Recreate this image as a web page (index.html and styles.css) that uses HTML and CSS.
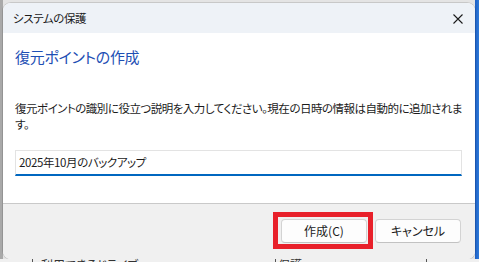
FILE: index.html
```html
<!DOCTYPE html>
<html lang="ja">
<head>
<meta charset="utf-8">
<link rel="stylesheet" href="styles.css">
</head>
<body>
<div class="screen">
  <div class="desk-row">
    <div class="dialog">
      <div class="titlebar">
        <span class="title">システムの保護</span>
        <svg class="close" width="10" height="10" viewBox="0 0 10 10"><path d="M0.5 0.5 L9.5 9.5 M9.5 0.5 L0.5 9.5" stroke="#1b1b1b" stroke-width="1.1" fill="none"/></svg>
      </div>
      <div class="content">
        <h1 class="heading">復元ポイントの作成</h1>
        <p class="desc">復元ポイントの識別に役立つ説明を入力してください。現在の日時の情報は自動的に追加されま<br>す。</p>
        <div class="input">2025年10月のバックアップ</div>
      </div>
      <div class="footer">
        <button class="btn">作成(C)</button>
        <button class="btn">キャンセル</button>
      </div>
      <div class="highlight"></div>
    </div>
  </div>
  <div class="behind">
    <span class="behind-a">利用できるドライブ</span>
    <span class="behind-b">保護</span>
  </div>
</div>
</body>
</html>
```
FILE: styles.css
```css
* { box-sizing: border-box; }
html, body { margin: 0; padding: 0; }
body {
  width: 479px;
  height: 262px;
  overflow: hidden;
  background: #d6d6d6;
  font-family: "Noto Sans CJK JP", "Noto Sans", sans-serif;
  font-feature-settings: "palt";
}
.screen {
  width: 479px;
  height: 262px;
  overflow: hidden;
  background: linear-gradient(to right, #a9a9a9 0, #a9a9a9 3px, #e4e4e4 3px, #e4e4e4 475px, #1d5fc4 475px, #2f7ad8 479px);
  padding-top: 3px;
}
.desk-row {
  padding-left: 3px;
}
.dialog {
  position: relative;
  width: 472px;
  height: 256px;
  border-radius: 8px;
  overflow: hidden;
  background: #ffffff;
  display: flex;
  flex-direction: column;
  box-shadow: 0 0 0 1px rgba(0,0,0,0.12);
}
.titlebar {
  height: 30px;
  background: #eef2f7;
  display: flex;
  align-items: center;
  justify-content: space-between;
  padding: 0 12px 0 10px;
}
.title {
  font-size: 11.5px;
  letter-spacing: -0.4px;
  color: #1b1b1b;
  line-height: 16px;
}
.close { display: block; margin-top: 1px; }
.content {
  flex: 1;
  padding: 14px 13px 0 12px;
  background: #ffffff;
}
.heading {
  margin: 0;
  font-size: 15px;
  font-weight: normal;
  letter-spacing: -0.3px;
  line-height: 20px;
  color: #1e4fb4;
}
.desc {
  margin: 33px 0 0 0;
  font-size: 11.5px;
  letter-spacing: -0.5px;
  line-height: 16px;
  color: #1b1b1b;
  white-space: nowrap;
}
.input {
  margin-top: 18px;
  height: 26px;
  border: 1px solid #e3e3e3;
  border-bottom: 2px solid #0067c0;
  font-size: 11.5px;
  letter-spacing: -0.4px;
  line-height: 22px;
  padding-left: 3px;
  color: #1b1b1b;
}
.footer {
  height: 56px;
  background: #f0f0f0;
  border-top: 1px solid #c9c9c9;
  display: flex;
  justify-content: flex-end;
  gap: 8px;
  padding: 15px 14px 0 0;
}
.btn {
  width: 86px;
  height: 24px;
  background: #fdfdfd;
  border: 1px solid #d3d3d3;
  border-bottom-color: #c2c2c2;
  border-radius: 4px;
  font-family: inherit;
  font-feature-settings: "palt";
  font-size: 12px;
  color: #1b1b1b;
  padding: 0;
  line-height: 20px;
}
.highlight {
  position: absolute;
  left: 270px;
  top: 209px;
  width: 100px;
  height: 37px;
  border: 5px solid #e8202a;
}
.behind {
  position: relative;
  height: 3px;
  background: #f0f0f0;
  font-size: 12px;
  line-height: 12px;
  color: #333;
  display: flex;
}
.behind-a {
  margin-left: 32px;
  padding-left: 8px;
  border-left: 1px solid #555;
  width: 243px;
}
.behind-b {
  padding-left: 2px;
  border-left: 1px solid #555;
  width: 152px;
  border-right: 1px solid #555;
}
```
